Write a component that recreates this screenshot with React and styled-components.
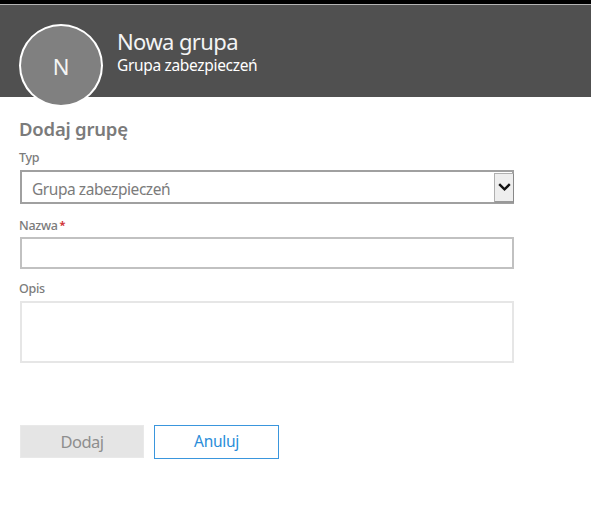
import React from "react";
import styled, { createGlobalStyle } from "styled-components";

const GlobalStyle = createGlobalStyle`
  *, *::before, *::after { box-sizing: border-box; }
  body {
    margin: 0;
    background: #fff;
    font-family: "Noto Sans", "Open Sans", sans-serif;
    overflow: hidden;
  }
`;

const Page = styled.div`
  width: 591px;
  height: 512px;
  background: #fff;
`;

const Header = styled.header`
  display: flex;
  align-items: flex-start;
  height: 97px;
  padding: 19px 0 0 19px;
  border-top: 4px solid #000;
  background: #505050;
  box-shadow: inset 0 1px 0 #b4b4b4;
`;

const Avatar = styled.div`
  display: flex;
  align-items: center;
  justify-content: center;
  width: 84px;
  height: 83px;
  margin-top: 1px;
  padding-top: 1px;
  flex: none;
  border: 2px solid #fff;
  border-radius: 50%;
  background: #808080;
  color: #f4f4f4;
  font-size: 22px;
  font-weight: 400;
  line-height: 30px;
`;

const Titles = styled.div`
  padding: 3px 0 0 14px;
  color: #fff;
`;

const Title = styled.h1`
  margin: 0;
  color: #f4f4f4;
  font-size: 22px;
  font-weight: 400;
  line-height: 30px;
  letter-spacing: -0.6px;
`;

const Subtitle = styled.div`
  margin-top: -1px;
  font-size: 15.5px;
  line-height: 20px;
  letter-spacing: -0.33px;
`;

const Form = styled.form`
  display: flex;
  flex-direction: column;
  width: 514px;
  padding: 20px 0 0 20px;
  color: #7b7b7b;
`;

const Heading = styled.h2`
  margin: 0 0 0 -1px;
  height: 24px;
  font-size: 18.5px;
  font-weight: 600;
  line-height: 24px;
  letter-spacing: -0.22px;
`;

const Label = styled.label`
  display: flex;
  gap: 2px;
  margin: ${(p) => p.$gap}px 0 ${(p) => p.$below ?? 4}px -1px;
  height: 16px;
  font-size: 12.5px;
  font-weight: 500;
  line-height: 16px;
  letter-spacing: -0.3px;
`;

const Required = styled.span`
  color: #d13438;
  font-size: 11px;
  font-weight: 700;
  line-height: 13px;
`;

const Select = styled.div`
  display: flex;
  justify-content: space-between;
  height: 34px;
  padding: 1px 0 0 10px;
  border: 2px solid #a0a0a0;
  font-size: 15.5px;
  line-height: 32px;
  letter-spacing: -0.45px;
`;

const Arrow = styled.span`
  display: flex;
  align-items: center;
  justify-content: center;
  width: 20px;
  height: 30px;
  margin-right: -2px;
  border: 1px solid #b0b0b0;
  border-right-color: #888;
  border-bottom: 2px solid #999;
  background: #eee;
`;

const Input = styled.input`
  height: 32px;
  padding: 0 10px;
  border: 2px solid #c1c1c1;
  border-radius: 0;
  outline: none;
  background: #fff;
`;

const TextArea = styled.textarea`
  height: 62px;
  padding: 6px 10px;
  border: 2px solid #e6e6e6;
  border-radius: 0;
  outline: none;
  resize: none;
  background: #fff;
`;

const Actions = styled.div`
  display: flex;
  gap: 10px;
  margin-top: 62px;
`;

const Button = styled.button`
  width: ${(p) => (p.$primary ? 124 : 125)}px;
  height: ${(p) => (p.$primary ? 33 : 34)}px;
  padding: ${(p) => (p.$primary ? "0" : "0 0 2px")};
  border: ${(p) => (p.$primary ? "1px solid #e9e9e9" : "1px solid #3a96dd")};
  background: ${(p) => (p.$primary ? "#e5e5e5" : "#fff")};
  color: ${(p) => (p.$primary ? "#8e8e8e" : "#2b8dd9")};
  font-family: inherit;
  font-size: ${(p) => (p.$primary ? 16.5 : 15.5)}px;
  line-height: 30px;
  letter-spacing: ${(p) => (p.$primary ? -0.5 : -0.3)}px;
`;

export default function App() {
  return (
    <Page>
      <GlobalStyle />
      <Header>
        <Avatar>N</Avatar>
        <Titles>
          <Title>Nowa grupa</Title>
          <Subtitle>Grupa zabezpieczeń</Subtitle>
        </Titles>
      </Header>
      <Form>
        <Heading>Dodaj grupę</Heading>
        <Label $gap={9}>Typ</Label>
        <Select>
          Grupa zabezpieczeń
          <Arrow>
            <svg width="13" height="9" viewBox="0 0 13 9" fill="none">
              <path d="M1.2 1.2 6.5 6.3l5.3-5.1" stroke="#111" strokeWidth="2.4" />
            </svg>
          </Arrow>
        </Select>
        <Label $gap={14} $below={3} htmlFor="name">
          Nazwa<Required>*</Required>
        </Label>
        <Input id="name" />
        <Label $gap={12} htmlFor="description">Opis</Label>
        <TextArea id="description" />
        <Actions>
          <Button type="button" $primary disabled>Dodaj</Button>
          <Button type="button">Anuluj</Button>
        </Actions>
      </Form>
    </Page>
  );
}
